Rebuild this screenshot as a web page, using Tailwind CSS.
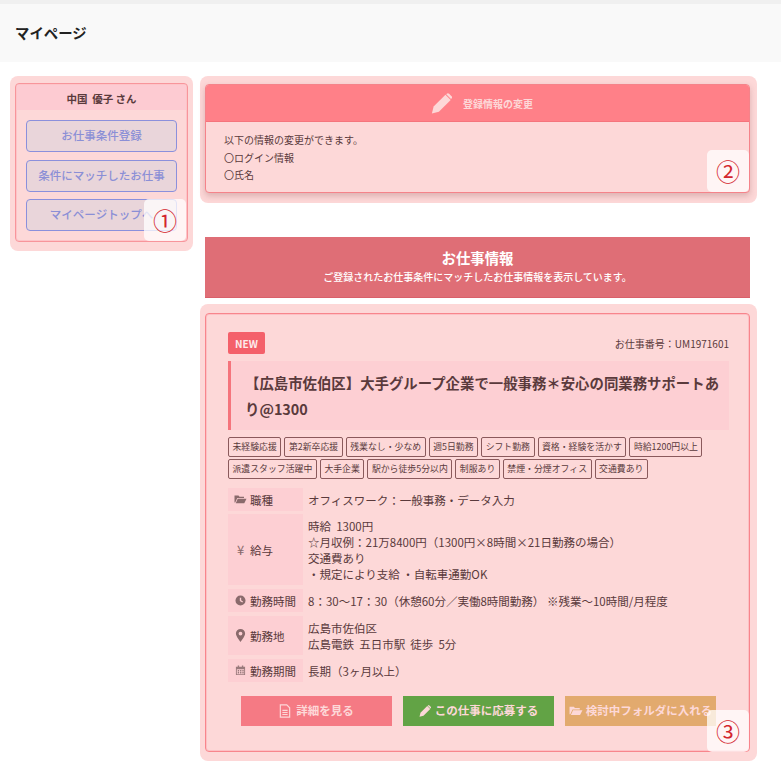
<!DOCTYPE html>
<html lang="ja">
<head>
  <meta charset="UTF-8">
  <title>マイページ</title>
  <script src="https://cdn.jsdelivr.net/npm/@tailwindcss/browser@4"></script>
</head>
<body class="bg-white text-[#5a3a3c] font-['Noto_Sans_CJK_JP',sans-serif] h-[766px] overflow-hidden">
  <div class="h-[4px] bg-[#f0f0f0]"></div>
  <header class="h-[58px] bg-[#f9f9f9] flex items-center pl-[15px]">
    <h1 class="text-[14.4px] font-bold text-[#222]">マイページ</h1>
  </header>

  <div class="flex items-start gap-[7px] pl-[10px] pt-[14px]">
    <!-- side menu -->
    <aside class="relative w-[183px] h-[175px] bg-[#fdd8d8] rounded-[8px] px-[5px] pt-[7px]">
      <div class="h-[159px] border border-[#f8959b] rounded-[4px] shadow-[inset_0_0_0_1px_#fdc4c8]">
        <p class="h-[25px] mx-[1px] mt-[1px] bg-[#fdcbd2] text-[10.5px] font-bold text-center leading-[27px]">中国&nbsp; 優子 さん</p>
        <div class="flex flex-col gap-[8px] pt-[10px] px-[10px]">
          <a class="h-[32px] flex items-center justify-center bg-[#e9d5da] border border-[#8b90dc] rounded-[4px] text-[11.5px] font-medium text-[#8b8fd6]">お仕事条件登録</a>
          <a class="h-[32px] flex items-center justify-center bg-[#e9d5da] border border-[#8b90dc] rounded-[4px] text-[11.5px] font-medium text-[#8b8fd6]">条件にマッチしたお仕事</a>
          <a class="h-[32px] -mt-[1px] flex items-center justify-center bg-[#e9d5da] border border-[#8b90dc] rounded-[4px] text-[11.5px] font-medium text-[#8b8fd6]">マイページトップへ</a>
        </div>
      </div>
      <span class="absolute left-[134px] top-[123px] w-[42px] h-[42px] rounded-[5px] bg-white/75 flex items-center justify-center text-[24px] text-[#d3262e]">①</span>
    </aside>

    <main class="w-[557px]">
      <!-- registration -->
      <section class="relative h-[127px] bg-[#fdd8d8] rounded-[8px] px-[5px] pt-[8px]">
        <div class="w-[545px] h-[109px] bg-[#fdd8d8] border border-[#f5838a] rounded-[4px] shadow-[0_3px_6px_rgba(120,60,60,0.25)] overflow-hidden">
          <div class="h-[37px] bg-[#ff8088] border-b border-[#f5747c] flex items-center justify-center gap-[11px] pl-[9px]">
            <svg class="w-[21px] h-[21px]" viewBox="0 0 24 24" fill="#fdd8d8"><path d="M1 23.500 3 15.500 16.500 2 22.500 8 9 21.500Z"/><path d="M18 .8a2 2 0 0 1 2.700 0l2.800 2.800a2 2 0 0 1 0 2.700l-.6.6-5.500-5.500Z"/></svg>
            <span class="text-[10px] font-bold text-[#fdd8d8]">登録情報の変更</span>
          </div>
          <div class="pl-[18px] pt-[9px] text-[10px] leading-[17.5px]">
            <p>以下の情報の変更ができます。</p>
            <p>〇ログイン情報</p>
            <p>〇氏名</p>
          </div>
        </div>
        <span class="absolute left-[507px] top-[74px] w-[42px] h-[42px] rounded-[5px] bg-white/75 flex items-center justify-center text-[24px] text-[#d3262e]">②</span>
      </section>

      <!-- job heading -->
      <div class="w-[545px] h-[61px] ml-[5px] mt-[34px] bg-[#df6e76] border-b border-[#d9606a] text-white text-center pt-[10px]">
        <h2 class="text-[14.4px] font-bold leading-[21px]">お仕事情報</h2>
        <p class="text-[10px] font-medium leading-[16px] mt-[1px]">ご登録されたお仕事条件にマッチしたお仕事情報を表示しています。</p>
      </div>

      <!-- job card -->
      <section class="relative h-[457px] mt-[6px] bg-[#fdd8d8] rounded-[8px] px-[5px] pt-[9px]">
        <div class="w-[545px] h-[439px] border border-[#f8858c] rounded-[4px] shadow-[inset_0_0_0_1px_#fdc0c4] pl-[22px] pr-[20px] pt-[18px]">
          <div class="flex items-center justify-between h-[22px]">
            <span class="w-[37px] h-[22px] bg-[#f4606a] rounded-[2px] text-[#fdecec] text-[10px] font-bold flex items-center justify-center">NEW</span>
            <span class="text-[10px]">お仕事番号：UM1971601</span>
          </div>
          <h3 class="mt-[7px] h-[69px] bg-[#fdcfd3] border-l-[3px] border-[#f5747c] pl-[14px] pr-[6px] pt-[9px] text-[14.4px] font-bold leading-[26px]">【広島市佐伯区】大手グループ企業で一般事務＊安心の同業務サポートあり@1300</h3>

          <ul class="mt-[7px] flex flex-wrap gap-x-[3px] gap-y-[2px] text-[8.9px] leading-[18px]">
            <li class="px-[3.5px] border border-[#8a5a5c] rounded-[2px]">未経験応援</li>
            <li class="px-[3.5px] border border-[#8a5a5c] rounded-[2px]">第2新卒応援</li>
            <li class="px-[3.5px] border border-[#8a5a5c] rounded-[2px]">残業なし・少なめ</li>
            <li class="px-[3.5px] border border-[#8a5a5c] rounded-[2px]">週5日勤務</li>
            <li class="px-[3.5px] border border-[#8a5a5c] rounded-[2px]">シフト勤務</li>
            <li class="px-[3.5px] border border-[#8a5a5c] rounded-[2px]">資格・経験を活かす</li>
            <li class="px-[3.5px] border border-[#8a5a5c] rounded-[2px]">時給1200円以上</li>
            <li class="px-[3.5px] border border-[#8a5a5c] rounded-[2px]">派遣スタッフ活躍中</li>
            <li class="px-[3.5px] border border-[#8a5a5c] rounded-[2px]">大手企業</li>
            <li class="px-[3.5px] border border-[#8a5a5c] rounded-[2px]">駅から徒歩5分以内</li>
            <li class="px-[3.5px] border border-[#8a5a5c] rounded-[2px]">制服あり</li>
            <li class="px-[3.5px] border border-[#8a5a5c] rounded-[2px]">禁煙・分煙オフィス</li>
            <li class="px-[3.5px] border border-[#8a5a5c] rounded-[2px]">交通費あり</li>
          </ul>

          <dl class="mt-[9px] grid grid-cols-[75px_1fr] gap-x-[5px] gap-y-[3px] text-[11.5px] leading-[16px]">
            <dt class="h-[23px] bg-[#fdcfd3] flex items-center gap-[3px] pl-[6px]">
              <svg class="w-[13px] h-[11px]" viewBox="0 0 26 22" fill="#8a6a6c"><path d="M1 3h8l2 2.500h9V8H6.500L2.500 17H1Z"/><path d="M7.500 9.500H25L20.500 18.500H3.500Z"/></svg>
              職種
            </dt>
            <dd class="flex items-center">オフィスワーク：一般事務・データ入力</dd>

            <dt class="h-[71px] bg-[#fdcfd3] flex items-center gap-[3px] pl-[6px]">
              <span class="w-[13px] text-center text-[13px] text-[#8a6a6c]">¥</span>
              給与
            </dt>
            <dd class="flex flex-col justify-center">
              <p>時給&nbsp; 1300円</p>
              <p>☆月収例：21万8400円（1300円×8時間×21日勤務の場合）</p>
              <p>交通費あり</p>
              <p>・規定により支給 ・自転車通勤OK</p>
            </dd>

            <dt class="h-[23px] mt-[1px] bg-[#fdcfd3] flex items-center gap-[3px] pl-[6px]">
              <svg class="w-[13px] h-[11px]" viewBox="0 0 28 24" fill="#8a6a6c"><path fill-rule="evenodd" d="M14 1a11 11 0 1 0 0 22 11 11 0 0 0 0-22Zm-1.500 5h3v5.500l4 2.500-1.500 2.500-5.500-3.500Z"/></svg>
              勤務時間
            </dt>
            <dd class="mt-[1px] flex items-center">8：30～17：30（休憩60分／実働8時間勤務） ※残業～10時間/月程度</dd>

            <dt class="h-[39px] mt-[1px] bg-[#fdcfd3] flex items-center gap-[3px] pl-[6px]">
              <svg class="w-[13px] h-[13px]" viewBox="0 0 24 24" fill="#8a6a6c"><path fill-rule="evenodd" d="M12 0a8.500 8.500 0 0 0-8.500 8.500C3.500 14 12 24 12 24s8.500-10 8.500-15.500A8.500 8.500 0 0 0 12 0Zm0 5a3.500 3.500 0 1 1 0 7 3.500 3.500 0 0 1 0-7Z"/></svg>
              勤務地
            </dt>
            <dd class="mt-[1px] flex flex-col justify-center">
              <p>広島市佐伯区</p>
              <p>広島電鉄&nbsp; 五日市駅&nbsp; 徒歩&nbsp; 5分</p>
            </dd>

            <dt class="h-[23px] mt-[1px] bg-[#fdcfd3] flex items-center gap-[3px] pl-[6px]">
              <svg class="w-[13px] h-[11px]" viewBox="0 0 28 24" fill="#9a7a7c"><path fill-rule="evenodd" d="M8 1h3v3h6V1h3v3h4v18H4V4h4Zm-2 8v11h16V9Zm2 2h3v3H8Zm5 0h3v3h-3Zm5 0h3v3h-3ZM8 15.500h3v3H8Zm5 0h3v3h-3Zm5 0h3v3h-3Z"/></svg>
              勤務期間
            </dt>
            <dd class="mt-[1px] flex items-center">長期（3ヶ月以上）</dd>
          </dl>

          <div class="mt-[14px] ml-[13px] flex gap-[11px] text-[11.5px] font-bold text-[#fdd8d8]">
            <a class="w-[151px] h-[30px] bg-[#f57a84] flex items-center justify-center gap-[5px]">
              <svg class="w-[12px] h-[14px]" viewBox="0 0 20 24" fill="none" stroke="#fdd8d8" stroke-width="2"><path d="M2 1.500h11l5 5v16H2Z"/><path d="M5.500 11h9M5.500 14.500h9M5.500 18h9"/></svg>
              詳細を見る
            </a>
            <a class="w-[151px] h-[30px] bg-[#62a345] flex items-center justify-center gap-[4px]">
              <svg class="w-[12px] h-[12px]" viewBox="0 0 24 24" fill="#fdd8d8"><path d="M1 23.500 3 15.500 16.500 2 22.500 8 9 21.500Z"/><path d="M18 .8a2 2 0 0 1 2.700 0l2.800 2.800a2 2 0 0 1 0 2.700l-.6.6-5.500-5.500Z"/></svg>
              この仕事に応募する
            </a>
            <a class="w-[151px] h-[30px] bg-[#e2aa6e] flex items-center justify-center gap-[3px] whitespace-nowrap">
              <svg class="w-[14px] h-[12px]" viewBox="0 0 26 22" fill="#fdd8d8"><path d="M1 3h8l2 2.500h9V8H6.500L2.500 17H1Z"/><path d="M7.500 9.500H25L20.500 18.500H3.500Z"/></svg>
              検討中フォルダに入れる
            </a>
          </div>
        </div>
        <span class="absolute left-[507px] top-[406px] w-[42px] h-[42px] rounded-[5px] bg-white/75 flex items-center justify-center text-[24px] text-[#d3262e]">③</span>
      </section>
    </main>
  </div>
</body>
</html>
